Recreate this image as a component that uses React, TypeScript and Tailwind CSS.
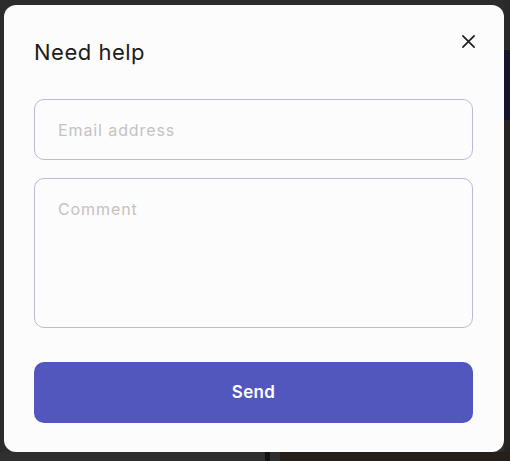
import React from "react";

export default function App() {
  return (
    <div
      className="relative w-[510px] h-[461px] overflow-hidden bg-[#2c2c2c]"
      style={{ fontFamily: "Inter, 'Noto Sans', sans-serif" }}
    >
      {/* page content behind the dimmed overlay */}
      <div className="flex flex-col w-full h-full">
        <div className="flex flex-1">
          <div className="flex-1 bg-[#2c2c2c]" />
          <div className="w-[6px] flex flex-col">
            <div className="h-[50px] bg-[#2a2a2a]" />
            <div className="h-[70px] bg-[#13162b]" />
            <div className="flex-1 bg-[#27241f]" />
          </div>
        </div>
        <div className="h-[9px] flex">
          <div className="w-[265px] bg-[#2f2f2f]" />
          <div className="w-[5px] bg-[#121212]" />
          <div className="w-[10px] bg-[#2f2f2f]" />
          <div className="flex-1 bg-[#241f1b]" />
        </div>
      </div>

      {/* modal overlay */}
      <div className="absolute inset-0 pl-[4px] pt-[5px]">
        <div className="w-[500px] h-[447px] rounded-[12px] bg-[#fcfcfd] pl-[30px] pr-[31px] pt-[32px]">
          <div className="flex items-start justify-between">
            <h2 className="text-[22px] leading-[30px] text-[#1c1c1c] font-normal tracking-[0.5px]">
              Need help
            </h2>
            <button className="mt-[-5px] mr-[-4px] w-[18px] h-[18px] flex items-center justify-center text-[#1a1a1a]">
              <svg width="15" height="15" viewBox="0 0 16 16" fill="none">
                <path d="M2 2L14 14M14 2L2 14" stroke="currentColor" strokeWidth="1.7" strokeLinecap="round" />
              </svg>
            </button>
          </div>

          <div className="mt-[32px] flex flex-col">
            <div className="h-[61px] rounded-[10px] border border-[#bdb9d9] flex items-center px-[23px] text-[16px] tracking-[0.9px] text-[#c3c3c3]">
              Email address
            </div>
            <div className="mt-[18px] h-[150px] rounded-[10px] border border-[#bdb9d9] px-[23px] pt-[19px] text-[16px] leading-[22px] tracking-[0.9px] text-[#c3c3c3]">
              Comment
            </div>
            <button className="mt-[34px] h-[61px] rounded-[10px] bg-[#5257bd] text-white text-[17px] font-semibold tracking-[0.3px] flex items-center justify-center">
              Send
            </button>
          </div>
        </div>
      </div>
    </div>
  );
}
